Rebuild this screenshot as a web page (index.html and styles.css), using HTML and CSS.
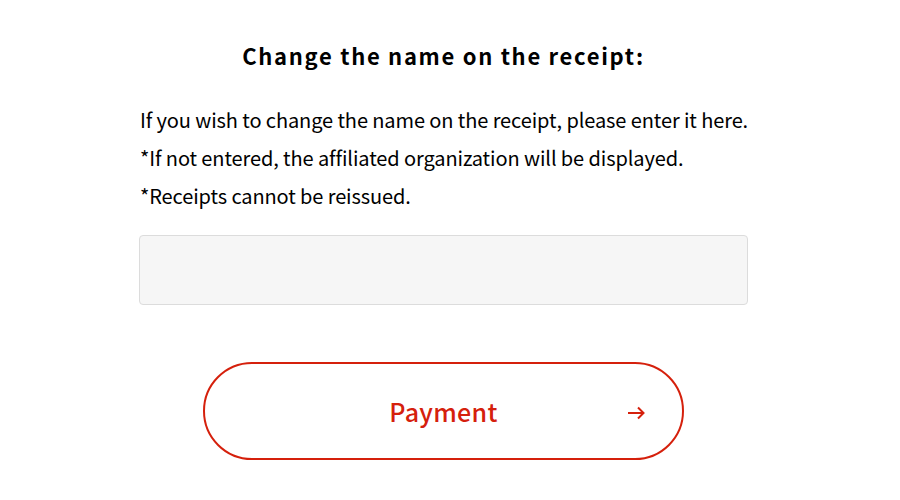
FILE: index.html
```html
<!DOCTYPE html>
<html>
<head>
<meta charset="utf-8">
<link rel="stylesheet" href="styles.css">
</head>
<body>
<main class="wrap">
  <h2 class="title">Change the name on the receipt:</h2>
  <div class="notes">
    <p>If you wish to change the name on the receipt, please enter it here.</p>
    <p>*If not entered, the affiliated organization will be displayed.</p>
    <p>*Receipts cannot be reissued.</p>
  </div>
  <input class="field" type="text">
  <div class="actions">
    <button class="pay" type="button"><span class="label">Payment</span><svg class="arrow" width="18" height="14" viewBox="0 0 18 14"><path d="M1 7H16.5M11 1.5L16.5 7L11 12.5" fill="none" stroke="#d5200c" stroke-width="2"/></svg></button>
  </div>
</main>
</body>
</html>
```
FILE: styles.css
```css
html, body { margin: 0; padding: 0; background: #fff; }
body { font-family: "Noto Sans CJK JP", "Noto Sans", sans-serif; color: #000; }
.wrap { width: 609px; margin-left: 139px; padding-top: 36px; }
.title { margin: 0; text-align: center; font-size: 22px; font-weight: 700; letter-spacing: 1.7px; line-height: 38px; }
.notes { margin-top: 27px; padding-left: 1px; }
.notes p { margin: 0; font-size: 20px; line-height: 38px; letter-spacing: -0.1px; white-space: nowrap; }
.field { display: block; box-sizing: border-box; width: 609px; height: 70px; margin-top: 20px; background: #f6f6f6; border: 1px solid #dcdcdc; border-radius: 4px; outline: none; }
.actions { display: flex; justify-content: center; margin-top: 57px; }
.pay { position: relative; box-sizing: border-box; width: 481px; height: 98px; border: 2px solid #d5200c; border-radius: 49px; background: #fff; color: #d5200c; font-family: inherit; font-size: 25px; font-weight: 500; display: flex; align-items: center; justify-content: center; cursor: pointer; padding: 0; }
.label { letter-spacing: 0.3px; }
.arrow { position: absolute; right: 37px; top: 42px; }
```
